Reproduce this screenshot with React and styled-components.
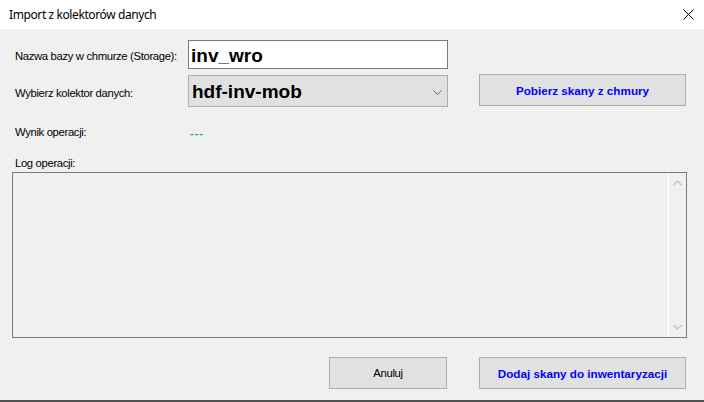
import React from "react";
import styled, { createGlobalStyle } from "styled-components";

const Global = createGlobalStyle`
  html, body { margin: 0; padding: 0; background: #f0f0f0; }
  * { box-sizing: border-box; }
`;

const Window = styled.div`
  width: 704px;
  height: 402px;
  display: flex;
  flex-direction: column;
  overflow: hidden;
  font-family: "Liberation Sans", Arial, sans-serif;
  color: #000;
`;

const TitleBar = styled.div`
  height: 29px;
  flex: none;
  background: #fff;
  display: flex;
  align-items: center;
  justify-content: space-between;
  padding: 0 10px 0 9px;
`;

const Title = styled.span`
  font-family: "Noto Sans", "Open Sans", sans-serif;
  font-size: 12px;
  letter-spacing: -0.4px;
  line-height: 16px;
  color: #000;
`;

const CloseIcon = styled.svg`
  width: 11px;
  height: 11px;
  display: block;
`;

const Body = styled.div`
  flex: 1;
  background: #f0f0f0;
  display: flex;
  flex-direction: column;
  padding: 11px 17px 0 12px;
`;

const Row = styled.div`
  display: flex;
  align-items: flex-start;
  margin-top: ${(p) => p.$mt || 0}px;
`;

const Label = styled.div`
  width: 176px;
  flex: none;
  padding-left: 3px;
  padding-top: ${(p) => p.$pt || 0}px;
  font-size: 11.3px;
  letter-spacing: -0.35px;
  line-height: 13px;
  white-space: nowrap;
`;

const TextField = styled.div`
  width: 260px;
  height: 29px;
  border: 1px solid #7a7a7a;
  background: #fff;
  font-weight: bold;
  font-size: 19px;
  line-height: 21px;
  padding: 4px 2px 0;
`;

const Combo = styled.div`
  width: 260px;
  height: 32px;
  margin-top: 1px;
  border: 1px solid #adadad;
  background: #e1e1e1;
  display: flex;
  justify-content: space-between;
  align-items: flex-start;
  padding: 5px 5px 0 3px;
  font-weight: bold;
  font-size: 19px;
  line-height: 21px;
`;

const Chevron = styled.svg`
  width: 9px;
  height: 5px;
  margin-top: 9px;
`;

const Button = styled.div`
  width: ${(p) => p.$w}px;
  height: 32px;
  margin-left: ${(p) => p.$ml || 0}px;
  border: 1px solid #adadad;
  background: #e1e1e1;
  display: flex;
  align-items: center;
  justify-content: center;
  font-size: ${(p) => (p.$primary ? "11.7px" : "11.3px")};
  font-weight: ${(p) => (p.$primary ? "bold" : "normal")};
  letter-spacing: ${(p) => (p.$primary ? "0" : "-0.35px")};
  color: ${(p) => (p.$primary ? "#0000ff" : "#000")};
  white-space: nowrap;
`;

const ResultValue = styled.div`
  padding-left: 2px;
  padding-top: 1px;
  font-size: 11px;
  font-weight: bold;
  line-height: 13px;
  letter-spacing: 1px;
  color: #0aa0a0;
`;

const LogBox = styled.div`
  width: 675px;
  height: 166px;
  margin-top: 2px;
  border: 1px solid #7a7a7a;
  background: #f0f0f0;
  display: flex;
  justify-content: flex-end;
`;

const ScrollBar = styled.div`
  width: 18px;
  border-left: 1px solid #ffffff;
  display: flex;
  flex-direction: column;
  justify-content: space-between;
  align-items: center;
  padding: 7px 0 7px;
`;

const Arrow = styled.svg`
  width: 9px;
  height: 6px;
  display: block;
`;

const Footer = styled.div`
  display: flex;
  justify-content: flex-end;
  gap: 32px;
  margin-top: 19px;
  padding-right: 1px;
`;

const BottomStrip = styled.div`
  height: 2px;
  flex: none;
  background: #505050;
`;

export default function App() {
  return (
    <>
      <Global />
      <Window>
        <TitleBar>
          <Title>Import z kolektorów danych</Title>
          <CloseIcon viewBox="0 0 11 11">
            <path d="M0.5 0.5 L10.5 10.5 M10.5 0.5 L0.5 10.5" stroke="#000" strokeWidth="1" fill="none" />
          </CloseIcon>
        </TitleBar>
        <Body>
          <Row>
            <Label $pt={10}>Nazwa bazy w chmurze (Storage):</Label>
            <TextField>inv_wro</TextField>
          </Row>
          <Row $mt={5}>
            <Label $pt={13}>Wybierz kolektor danych:</Label>
            <Combo>
              <span>hdf-inv-mob</span>
              <Chevron viewBox="0 0 9 5">
                <path d="M0.5 0.5 L4.5 4.5 L8.5 0.5" stroke="#606060" strokeWidth="1" fill="none" />
              </Chevron>
            </Combo>
            <Button $w={207} $ml={31} $primary>Pobierz skany z chmury</Button>
          </Row>
          <Row $mt={19}>
            <Label>Wynik operacji:</Label>
            <ResultValue>---</ResultValue>
          </Row>
          <Row $mt={17}>
            <Label>Log operacji:</Label>
          </Row>
          <LogBox>
            <ScrollBar>
              <Arrow viewBox="0 0 9 6">
                <path d="M0.5 5 L4.5 1 L8.5 5" stroke="#c4c4c4" strokeWidth="1.4" fill="none" />
              </Arrow>
              <Arrow viewBox="0 0 9 6">
                <path d="M0.5 1 L4.5 5 L8.5 1" stroke="#c4c4c4" strokeWidth="1.4" fill="none" />
              </Arrow>
            </ScrollBar>
          </LogBox>
          <Footer>
            <Button $w={118}>Anuluj</Button>
            <Button $w={207} $primary>Dodaj skany do inwentaryzacji</Button>
          </Footer>
        </Body>
        <BottomStrip />
      </Window>
    </>
  );
}
